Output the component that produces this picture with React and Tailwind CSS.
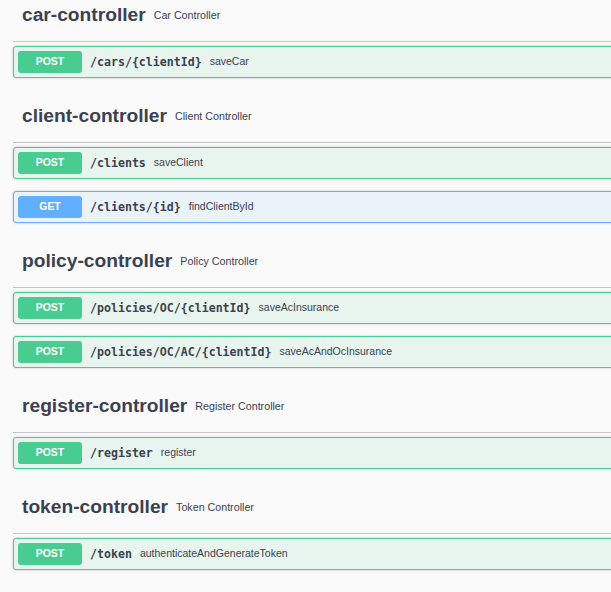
import React from "react";

const sections = [
  {
    name: "car-controller",
    desc: "Car Controller",
    ops: [{ method: "POST", path: "/cars/{clientId}", summary: "saveCar" }],
  },
  {
    name: "client-controller",
    desc: "Client Controller",
    ops: [
      { method: "POST", path: "/clients", summary: "saveClient" },
      { method: "GET", path: "/clients/{id}", summary: "findClientById" },
    ],
  },
  {
    name: "policy-controller",
    desc: "Policy Controller",
    ops: [
      { method: "POST", path: "/policies/OC/{clientId}", summary: "saveAcInsurance" },
      { method: "POST", path: "/policies/OC/AC/{clientId}", summary: "saveAcAndOcInsurance" },
    ],
  },
  {
    name: "register-controller",
    desc: "Register Controller",
    ops: [{ method: "POST", path: "/register", summary: "register" }],
  },
  {
    name: "token-controller",
    desc: "Token Controller",
    ops: [{ method: "POST", path: "/token", summary: "authenticateAndGenerateToken" }],
  },
];

const OpBlock = ({ method, path, summary }) => {
  const isGet = method === "GET";
  return (
    <div
      className={
        "mb-[12px] flex h-[32px] items-center rounded-[3px] border px-[4px] shadow-[0_0_3px_rgba(0,0,0,0.19)] " +
        (isGet ? "border-[#61affe] bg-[#ebf3fa]" : "border-[#49cc90] bg-[#e8f5ef]")
      }
    >
      <span
        className={
          "flex h-[22px] w-[64px] items-center justify-center rounded-[3px] font-['Liberation_Sans',Arial,sans-serif] text-[10.4px] font-bold text-white " +
          (isGet ? "bg-[#61affe]" : "bg-[#49cc90]")
        }
      >
        {method}
      </span>
      <span className="pl-[8px] pt-[1px] font-['DejaVu_Sans_Mono',monospace] text-[11.6px] font-bold text-[#3b4151]">
        {path}
      </span>
      <span className="pl-[8px] font-['Liberation_Sans',Arial,sans-serif] text-[10.5px] text-[#3b4151]">
        {summary}
      </span>
    </div>
  );
};

const TagSection = ({ name, desc, ops }) => (
  <div>
    <div className="flex h-[53px] items-center border-b border-[#c4c6cb] pl-[9px]">
      <span className="font-['Liberation_Sans',Arial,sans-serif] text-[19.2px] font-bold text-[#3b4151]">
        {name}
      </span>
      <span className="pl-[8px] font-['Liberation_Sans',Arial,sans-serif] text-[10.7px] text-[#3b4151]">
        {desc}
      </span>
    </div>
    <div className="pt-[4px]">
      {ops.map((op) => (
        <OpBlock key={op.method + op.path} {...op} />
      ))}
    </div>
  </div>
);

export default function App() {
  return (
    <div className="h-[592px] w-[611px] overflow-hidden bg-[#fafafa]">
      <div className="-mt-[11px] ml-[13px] w-[660px]">
        {sections.map((s) => (
          <TagSection key={s.name} {...s} />
        ))}
      </div>
    </div>
  );
}
